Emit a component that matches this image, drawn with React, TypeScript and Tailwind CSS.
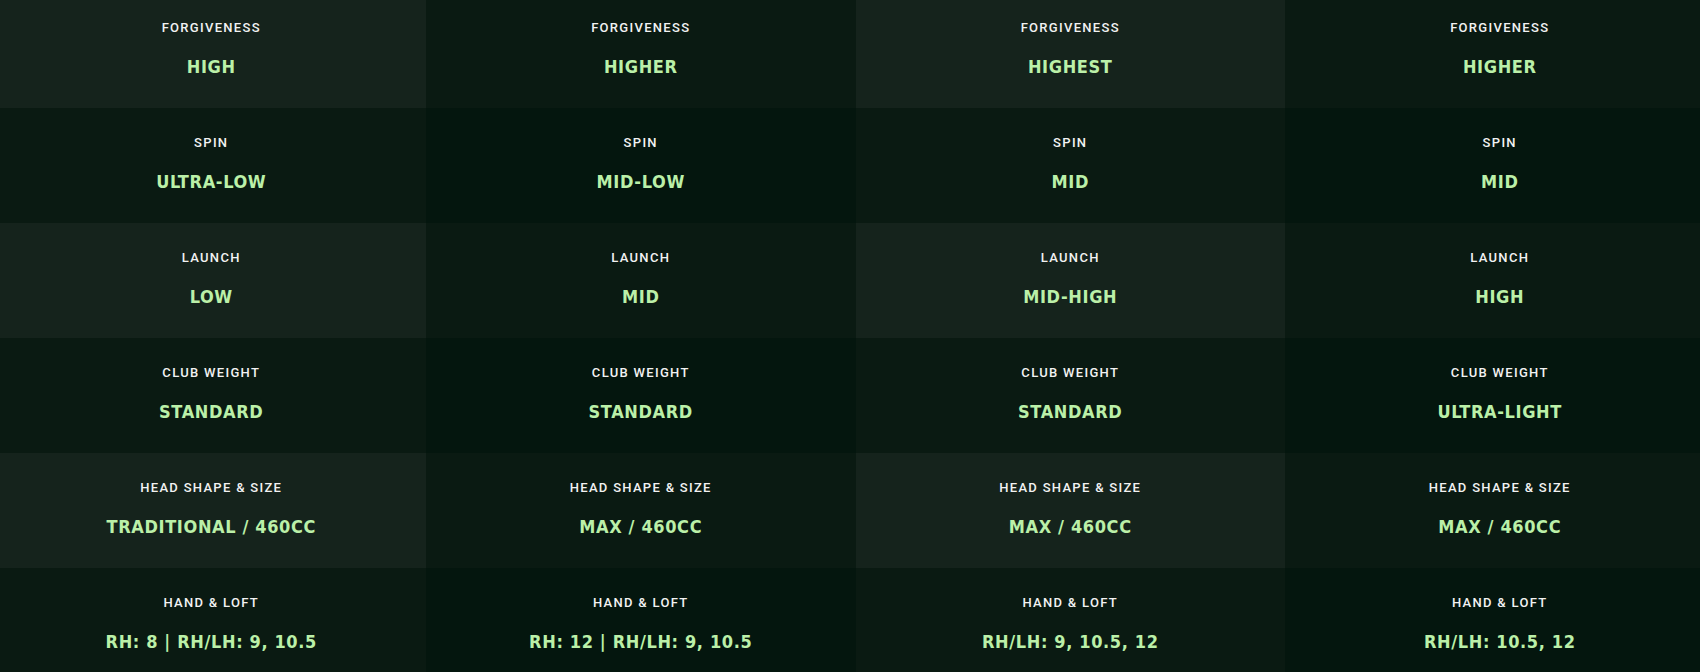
import React from 'react'

type Spec = { label: string; value: string }

const clubs: Spec[][] = [
    [
        { label: 'Forgiveness', value: 'High' },
        { label: 'Spin', value: 'Ultra-Low' },
        { label: 'Launch', value: 'Low' },
        { label: 'Club Weight', value: 'Standard' },
        { label: 'Head Shape & Size', value: 'Traditional / 460cc' },
        { label: 'Hand & Loft', value: 'RH: 8 | RH/LH: 9, 10.5' },
    ],
    [
        { label: 'Forgiveness', value: 'Higher' },
        { label: 'Spin', value: 'Mid-Low' },
        { label: 'Launch', value: 'Mid' },
        { label: 'Club Weight', value: 'Standard' },
        { label: 'Head Shape & Size', value: 'Max / 460cc' },
        { label: 'Hand & Loft', value: 'RH: 12 | RH/LH: 9, 10.5' },
    ],
    [
        { label: 'Forgiveness', value: 'Highest' },
        { label: 'Spin', value: 'Mid' },
        { label: 'Launch', value: 'Mid-High' },
        { label: 'Club Weight', value: 'Standard' },
        { label: 'Head Shape & Size', value: 'Max / 460cc' },
        { label: 'Hand & Loft', value: 'RH/LH: 9, 10.5, 12' },
    ],
    [
        { label: 'Forgiveness', value: 'Higher' },
        { label: 'Spin', value: 'Mid' },
        { label: 'Launch', value: 'High' },
        { label: 'Club Weight', value: 'Ultra-Light' },
        { label: 'Head Shape & Size', value: 'Max / 460cc' },
        { label: 'Hand & Loft', value: 'RH/LH: 10.5, 12' },
    ],
]

// rows alternate light/dark, odd columns sit a shade darker
const cellBg = (col: number, row: number) => {
    if (row % 2 === 0) return col % 2 === 0 ? 'bg-[#15231c]' : 'bg-[#0a1a12]'
    return col % 2 === 0 ? 'bg-[#0a1a12]' : 'bg-[#04160e]'
}

const App = () => {
    return (
        <div className="w-[1700px] h-[672px] overflow-hidden bg-[#0a1a12] font-['DejaVu_Sans_Condensed','DejaVu_Sans',sans-serif]">
            <div className="flex -mt-[7px] -ml-[3.5px] w-[1720px]">
                {clubs.map((specs, col) => (
                    <div key={col} className="flex flex-col w-[429.5px] shrink-0">
                        {specs.map((s, row) => (
                            <div key={row} className={`h-[115px] flex flex-col items-center pt-[27px] ${cellBg(col, row)}`}>
                                <p className="font-['Roboto',sans-serif] text-[13px] leading-4 font-medium uppercase tracking-[0.1em] text-[#f2f2f2]">
                                    {s.label}
                                </p>
                                <p className="mt-[19px] text-[18px] leading-6 font-bold uppercase tracking-[0.035em] text-[#bbf0a8]">
                                    {s.value}
                                </p>
                            </div>
                        ))}
                    </div>
                ))}
            </div>
        </div>
    )
}

export default App
